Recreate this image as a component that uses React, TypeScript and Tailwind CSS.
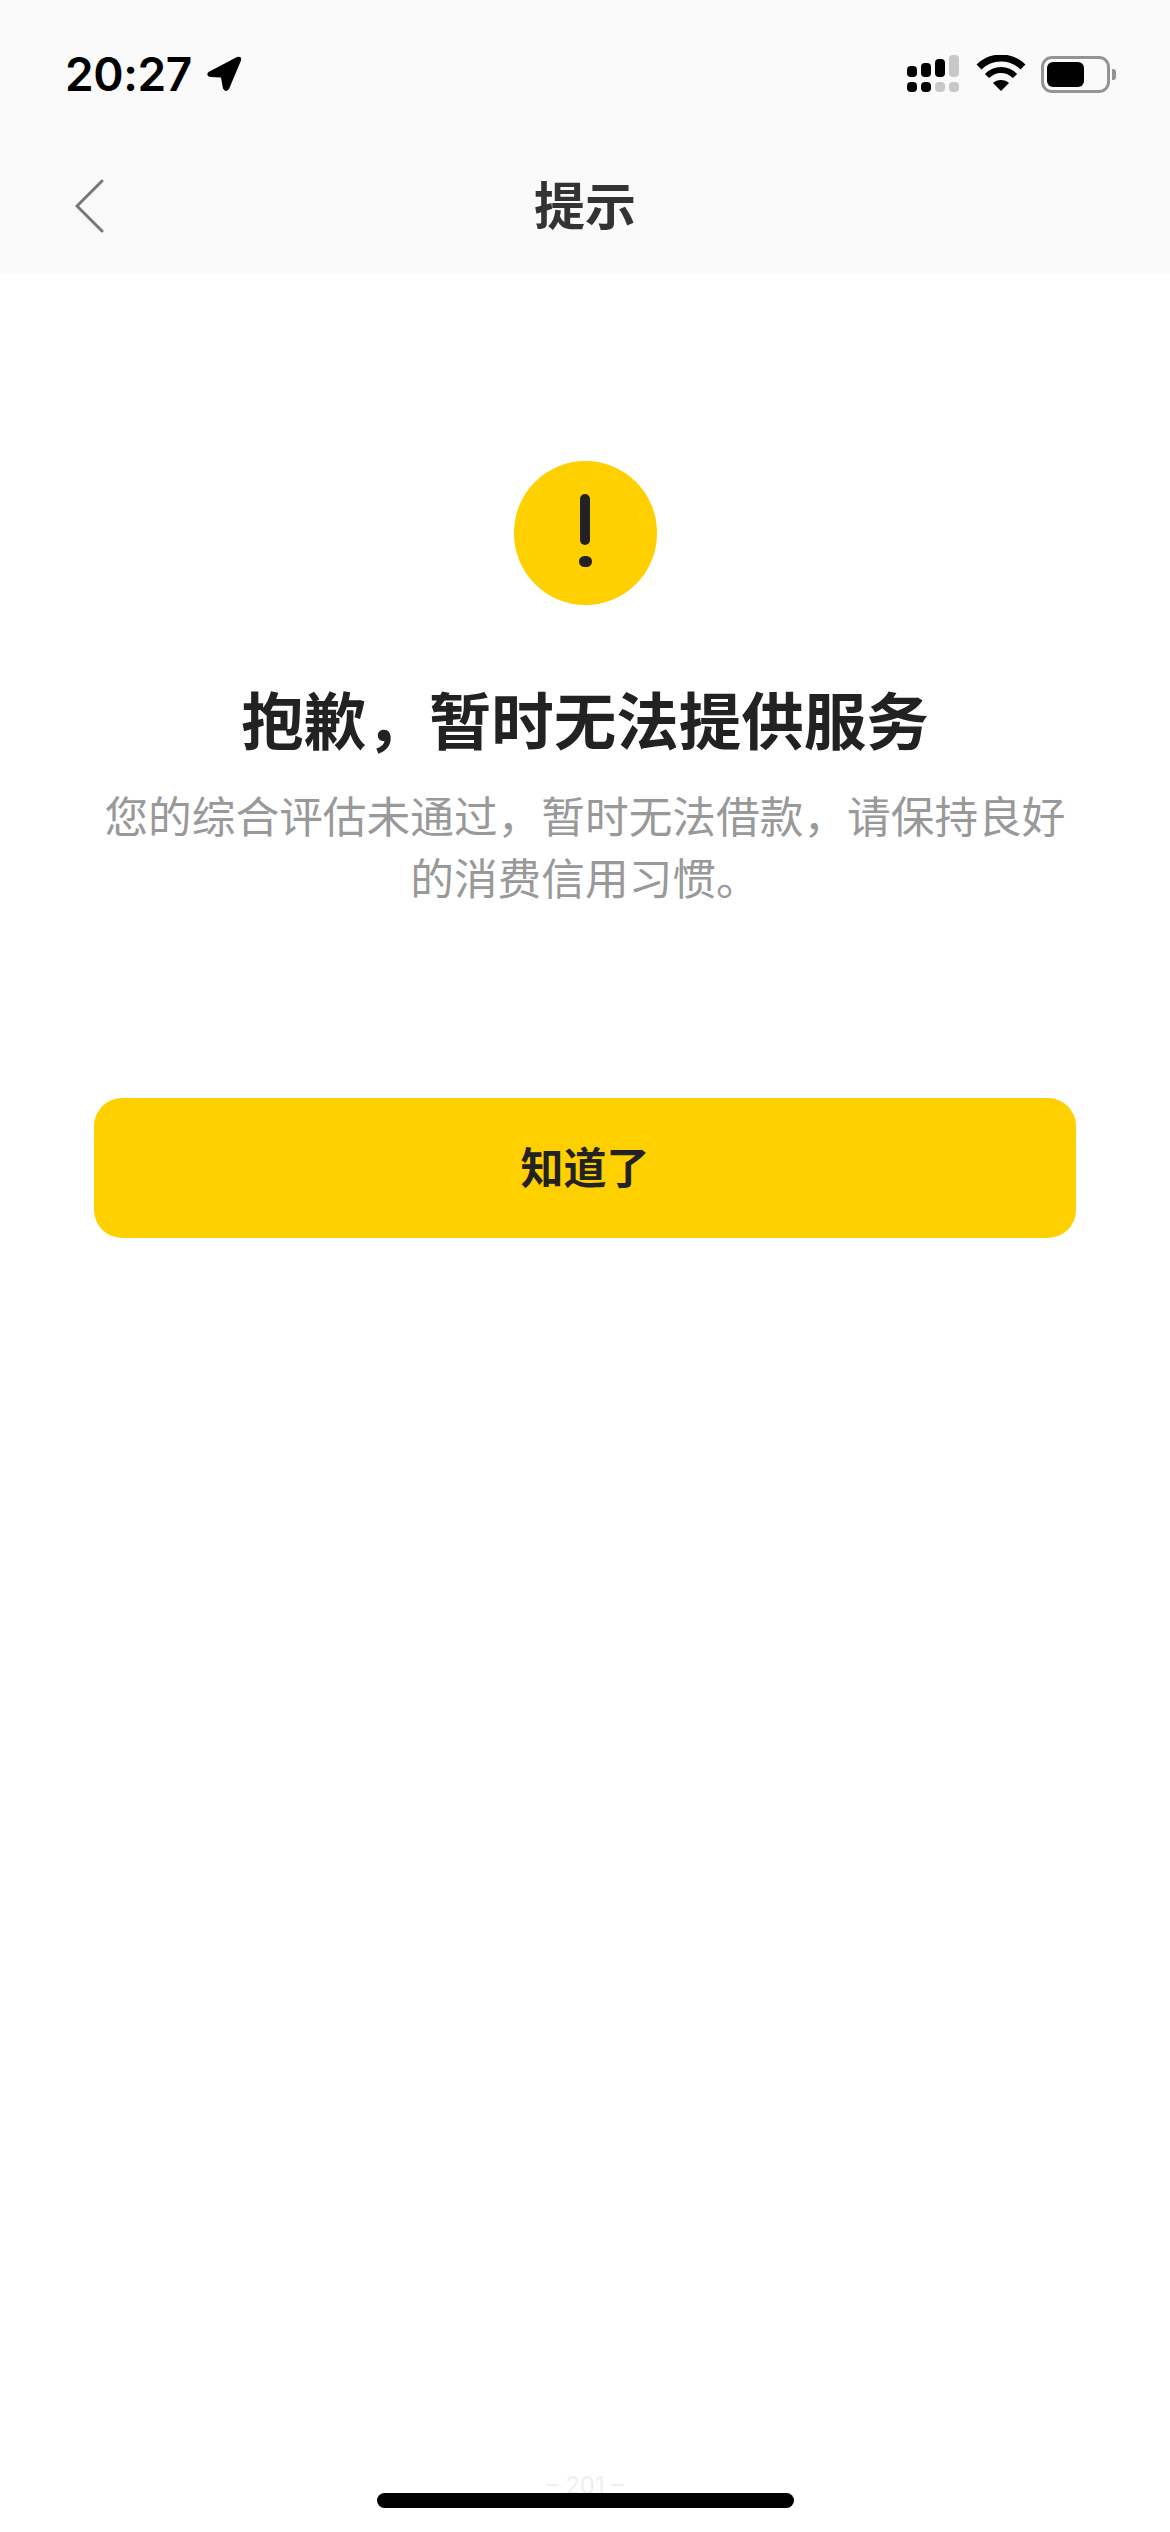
export default function App() {
  return (
    <div className="relative flex h-[2532px] w-[1170px] flex-col overflow-hidden bg-white font-['Noto_Sans_CJK_SC','Noto_Sans',sans-serif]">
      <header className="flex h-[274px] flex-col bg-[#fafafa]">
        <div className="flex h-[150px] items-start justify-between pt-[55px] pl-[65px] pr-[54px]">
          <div className="flex items-center gap-[14px]">
            <span className="font-['Inter',sans-serif] text-[46px] leading-[38px] font-semibold tracking-[-0.4px] text-black">20:27</span>
            <svg width="36" height="36" viewBox="0 0 36 36" className="mt-[-1px]">
              <path d="M2.5 16 L31 1 Q36 -0.5 35 4.5 L23 33 Q19.5 37 17 32.5 L15 21.5 L4 21 Q-0.5 19.5 2.5 16 Z" fill="#000" />
            </svg>
          </div>
          <div className="flex items-center">
            <svg width="54" height="38" viewBox="0 0 54 38" className="mr-[15px]">
              <rect x="0" y="11" width="10" height="11" rx="4" fill="#000" />
              <rect x="14" y="8" width="10" height="14" rx="4" fill="#000" />
              <rect x="28" y="4" width="10" height="18" rx="4" fill="#000" />
              <rect x="42" y="0" width="10" height="22" rx="4" fill="#c8c8c8" />
              <rect x="0" y="27" width="10" height="10" rx="4" fill="#000" />
              <rect x="14" y="27" width="10" height="10" rx="4" fill="#000" />
              <rect x="28" y="27" width="10" height="10" rx="4" fill="#c8c8c8" />
              <rect x="42" y="27" width="10" height="10" rx="4" fill="#c8c8c8" />
            </svg>
            <svg width="50" height="38" viewBox="0 0 50 38" className="mr-[15px]">
              <path d="M3 12 C15 0 35 0 47 12" fill="none" stroke="#000" strokeWidth="7" />
              <path d="M11 21 C19 13 31 13 39 21" fill="none" stroke="#000" strokeWidth="6" />
              <path d="M17 28 C21 24 29 24 33 28 L25 36 Z" fill="#000" />
            </svg>
            <div className="flex items-center">
              <div className="flex h-[37px] w-[69px] items-center rounded-[11px] border-[3px] border-[#949494] pl-[3px]">
                <div className="h-[25px] w-[37px] rounded-[6px] bg-black" />
              </div>
              <div className="ml-[2px] h-[11px] w-[4px] rounded-r-[3px] bg-[#949494]" />
            </div>
          </div>
        </div>
        <nav className="relative flex h-[112px] items-center justify-center">
          <svg width="30" height="54" viewBox="0 0 30 54" className="absolute left-[75px] top-[29px]">
            <path d="M27 2 L2 27 L27 52" fill="none" stroke="#777" strokeWidth="3" strokeLinecap="round" strokeLinejoin="miter" />
          </svg>
          <h1 className="mt-[-6px] text-[51px] leading-[70px] font-bold text-[#333]">提示</h1>
        </nav>
      </header>

      <main className="flex flex-col items-center">
        <div className="mt-[187px] flex h-[144px] w-[143px] flex-col items-center rounded-full bg-[#ffd000]">
          <div className="mt-[33px] h-[51px] w-[10px] rounded-full bg-[#222]" />
          <div className="mt-[11px] h-[11px] w-[13px] rounded-full bg-[#222]" />
        </div>
        <h2 className="mt-[68px] text-[62.5px] leading-[90px] font-bold text-[#222]">抱歉，暂时无法提供服务</h2>
        <p className="mt-[20px] w-[980px] text-center text-[43.7px] leading-[62px] text-[#999]">
          您的综合评估未通过，暂时无法借款，请保持良好的消费信用习惯。
        </p>
        <button className="mt-[191px] flex h-[140px] w-[982px] items-center justify-center rounded-[28px] bg-[#ffd000] pb-[6px] text-[43px] font-bold text-[#222]">
          知道了
        </button>
      </main>

      <div className="absolute bottom-[24px] left-0 flex w-full flex-col items-center">
        <span className="mb-[-8px] font-['Inter',sans-serif] text-[24px] leading-[30px] text-[#efefef]">– 201 –</span>
        <div className="relative h-[15px] w-[417px] rounded-full bg-black" />
      </div>
    </div>
  );
}
